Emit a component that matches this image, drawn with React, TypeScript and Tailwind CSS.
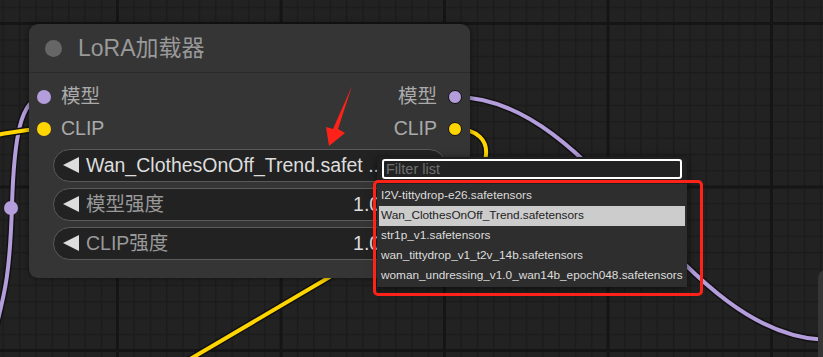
import React from 'react';

const FONT = "font-['Liberation_Sans','Noto_Sans_CJK_SC',sans-serif]";

const items = [
  'I2V-tittydrop-e26.safetensors',
  'Wan_ClothesOnOff_Trend.safetensors',
  'str1p_v1.safetensors',
  'wan_tittydrop_v1_t2v_14b.safetensors',
  'woman_undressing_v1.0_wan14b_epoch048.safetensors',
];

function Wires() {
  return (
    <svg className="absolute inset-0" width={823} height={357}>
      <defs>
        <pattern id="minor" x={2.55} y={6.65} width={16.35} height={16.35} patternUnits="userSpaceOnUse">
          <rect x={0} y={0} width={1.5} height={16.35} fill="#1b1b1b" />
          <rect x={0} y={0} width={16.35} height={1.5} fill="#1b1b1b" />
        </pattern>
        <pattern id="major" x={116} y={22} width={163.5} height={163.5} patternUnits="userSpaceOnUse">
          <rect x={0} y={0} width={3} height={163.5} fill="#151515" />
          <rect x={0} y={0} width={163.5} height={3} fill="#151515" />
        </pattern>
      </defs>
      <rect width={823} height={357} fill="#222222" />
      <rect width={823} height={357} fill="url(#minor)" />
      <rect width={823} height={357} fill="url(#major)" />

      {/* purple links */}
      <g fill="none" strokeLinecap="round">
        <path d="M44 97 C20 97 14 140 12 205 S6 290 -6 335" stroke="#111" strokeWidth={7} />
        <path d="M44 97 C20 97 14 140 12 205 S6 290 -6 335" stroke="#b39ddb" strokeWidth={4} />
        <path d="M455 97 C600 97 680 340 830 340" stroke="#111" strokeWidth={7} />
        <path d="M455 97 C600 97 680 340 830 340" stroke="#b39ddb" strokeWidth={4} />
        {/* yellow links */}
        <path d="M-10 136 C10 133 25 129 44 129" stroke="#111" strokeWidth={7} />
        <path d="M-10 136 C10 133 25 129 44 129" stroke="#ffd500" strokeWidth={4} />
        <path d="M455 129 C500 129 500 175 430 218 L180 365" stroke="#111" strokeWidth={7} />
        <path d="M455 129 C500 129 500 175 430 218 L180 365" stroke="#ffd500" strokeWidth={4} />
      </g>
      <circle cx={11} cy={208} r={7} fill="#b39ddb" />
    </svg>
  );
}

function Dot({ color, outline }: { color: string; outline?: boolean }) {
  return (
    <span
      className={`block w-[14px] h-[14px] rounded-full ${outline ? 'border-[1.5px] border-[#111]' : ''}`}
      style={{ backgroundColor: color }}
    />
  );
}

function LeftArrow() {
  return (
    <svg width={17} height={17} viewBox="0 0 17 17" className="shrink-0">
      <polygon points="16,0 16,16 0,8" fill="#dddddd" />
    </svg>
  );
}

function Widget({ label, value, labelClass }: { label: string; value?: string; labelClass: string }) {
  return (
    <div className="h-[33px] rounded-full border border-[#5a5a5a] bg-[#222222] flex items-center pl-[9px] pr-[54px]">
      <LeftArrow />
      <span className={`ml-[6px] text-[19.5px] whitespace-nowrap ${labelClass}`}>{label}</span>
      {value && <span className="ml-auto text-[19.5px] text-[#dddddd]">{value}</span>}
    </div>
  );
}

function LoraNode() {
  return (
    <div className="absolute left-[29px] top-[24px] w-[441px] h-[254px] rounded-[9px] bg-[#353535] shadow-[0_0_6px_rgba(0,0,0,0.5)] flex flex-col">
      <div className="h-[49px] flex items-center pl-[16px] border-b border-[#2a2a2a]">
        <span className="block w-[17px] h-[17px] rounded-full bg-[#666666]" />
        <span className="ml-[16px] text-[23px] text-[#999999] leading-none">LoRA加载器</span>
      </div>
      <div className="pt-[8px] flex flex-col">
        <div className="h-[32px] flex items-center justify-between pl-[8px] pr-[8px]">
          <div className="flex items-center gap-[10px]">
            <Dot color="#b39ddb" />
            <span className="text-[19.5px] text-[#aaaaaa]">模型</span>
          </div>
          <div className="flex items-center gap-[11px]">
            <span className="text-[19.5px] text-[#aaaaaa]">模型</span>
            <Dot color="#b39ddb" outline />
          </div>
        </div>
        <div className="h-[32px] flex items-center justify-between pl-[8px] pr-[8px]">
          <div className="flex items-center gap-[10px]">
            <Dot color="#ffd500" />
            <span className="text-[19.5px] text-[#aaaaaa]">CLIP</span>
          </div>
          <div className="flex items-center gap-[11px]">
            <span className="text-[19.5px] text-[#aaaaaa]">CLIP</span>
            <Dot color="#ffd500" outline />
          </div>
        </div>
        <div className="mt-[4px] mx-[24px] flex flex-col gap-[6px]">
          <Widget label="Wan_ClothesOnOff_Trend.safet ..." labelClass="text-[#dddddd]" />
          <Widget label="模型强度" value="1.00" labelClass="text-[#999999]" />
          <Widget label="CLIP强度" value="1.00" labelClass="text-[#999999]" />
        </div>
      </div>
    </div>
  );
}

function Dropdown() {
  return (
    <div className="absolute left-[377px] top-[157px] w-[310px] bg-[#202020] shadow-[0_2px_8px_rgba(0,0,0,0.6)]">
      <div className="px-[5px] pt-[2px] pb-[5px]">
        <div className="h-[20px] rounded-[3px] border-2 border-white bg-[#222222] flex items-center px-[2px]">
          <span className="text-[14.5px] text-[#707070] leading-none">Filter list</span>
        </div>
      </div>
      <div className="bg-[#2e2e2e] pt-[2px] pb-[1px] px-[2px]">
        {items.map((it, i) => (
          <div
            key={it}
            className={`h-[20px] flex items-center px-[2px] text-[11.8px] whitespace-nowrap ${
              i === 1 ? 'bg-[#cccccc] text-[#222222]' : 'text-[#dddddd]'
            }`}
          >
            {it}
          </div>
        ))}
      </div>
    </div>
  );
}

export default function App() {
  return (
    <div className={`relative w-[823px] h-[357px] overflow-hidden bg-[#222222] ${FONT}`}>
      <Wires />
      <LoraNode />
      {/* next node peeking in at the right edge */}
      <div className="absolute left-[818px] top-[270px] w-[40px] h-[120px] rounded-tl-[8px] bg-[#353535]" />
      <Dropdown />
      {/* annotation */}
      <div className="absolute left-[373px] top-[180px] w-[330px] h-[116px] rounded-[5px] border-[3px] border-[#ff2218]" />
      <svg className="absolute left-0 top-0 pointer-events-none" width={823} height={357}>
        <polygon points="352,86 338,129 345,133 329,146 326,127 333,129" fill="#ff2218" />
      </svg>
    </div>
  );
}
